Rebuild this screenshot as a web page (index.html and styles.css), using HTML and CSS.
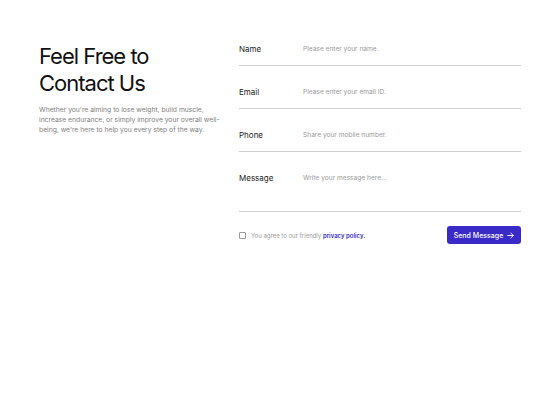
FILE: index.html
```html
<!DOCTYPE html>
<html lang="en">
<head>
<meta charset="utf-8">
<title>Contact</title>
<link rel="stylesheet" href="styles.css">
</head>
<body>
<main class="contact">
  <section class="intro">
    <h1 class="title">Feel Free to<br>Contact Us</h1>
    <p class="lead">Whether you're aiming to lose weight, build muscle, increase endurance, or simply improve your overall well-being, we're here to help you every step of the way.</p>
  </section>
  <form class="form">
    <label class="field">
      <span class="field-label">Name</span>
      <input class="field-input" type="text" placeholder="Please enter your name.">
    </label>
    <label class="field">
      <span class="field-label">Email</span>
      <input class="field-input" type="email" placeholder="Please enter your email ID.">
    </label>
    <label class="field">
      <span class="field-label">Phone</span>
      <input class="field-input" type="tel" placeholder="Share your mobile number.">
    </label>
    <label class="field field-message">
      <span class="field-label">Message</span>
      <textarea class="field-input field-textarea" placeholder="Write your message here..."></textarea>
    </label>
    <div class="actions">
      <label class="agree">
        <span class="checkbox"></span>
        <span>You agree to our friendly <a class="policy" href="#">privacy policy.</a></span>
      </label>
      <button class="send" type="button">Send Message
        <svg class="arrow" viewBox="0 0 10 10" width="7" height="7" aria-hidden="true"><path d="M1 5h8M5.5 1.5L9 5l-3.5 3.5" fill="none" stroke="currentColor" stroke-width="1.3" stroke-linecap="round" stroke-linejoin="round"/></svg>
      </button>
    </div>
  </form>
</main>
</body>
</html>
```
FILE: styles.css
```css
* { box-sizing: border-box; }
html, body { margin: 0; padding: 0; background: #fff; }
body {
  font-family: Inter, "Noto Sans", "Liberation Sans", sans-serif;
  color: #1a1a1a;
  width: 560px;
  height: 400px;
}
.contact {
  display: grid;
  grid-template-columns: 184px 1fr;
  column-gap: 16px;
  padding: 43px 39px 0 39px;
}
.title {
  margin: 0;
  font-size: 22px;
  line-height: 27px;
  font-weight: 400;
  letter-spacing: -1px;
  color: #111;
}
.lead {
  margin: 8px 0 0;
  font-size: 6.75px;
  line-height: 10px;
  color: #808080;
  letter-spacing: 0;
}
.form { display: flex; flex-direction: column; }
.field {
  display: flex;
  align-items: flex-start;
  padding-bottom: 10px;
  margin-bottom: 20px;
  border-bottom: 1px solid #cfcfcf;
}
.field-label {
  width: 64px;
  flex: none;
  font-size: 8px;
  line-height: 12px;
  color: #222;
  font-weight: 400;
}
.field-input {
  flex: 1;
  border: 0;
  outline: none;
  padding: 0;
  margin: 0;
  font-family: inherit;
  font-size: 6.6px;
  line-height: 12px;
  height: 12px;
  color: #333;
  background: transparent;
}
.field-input::placeholder { color: #9a9a9a; }
.field-message { padding-bottom: 27px; margin-bottom: 14px; }
.field-textarea { resize: none; overflow: hidden; }
.actions {
  display: flex;
  align-items: center;
  justify-content: space-between;
}
.agree {
  display: flex;
  align-items: center;
  gap: 5px;
  font-size: 6px;
  color: #9a9a9a;
}
.checkbox {
  width: 7px;
  height: 7px;
  border: 1px solid #9a9a9a;
  border-radius: 1px;
}
.policy { color: #3a2cc6; font-weight: 600; text-decoration: none; }
.send {
  display: flex;
  align-items: center;
  gap: 4px;
  height: 18px;
  width: 74px;
  justify-content: center;
  border: 0;
  border-radius: 3px;
  background: #3a2bc8;
  color: #fff;
  font-family: inherit;
  font-size: 7px;
  font-weight: 500;
  padding: 0;
}
.arrow { display: block; }
```
